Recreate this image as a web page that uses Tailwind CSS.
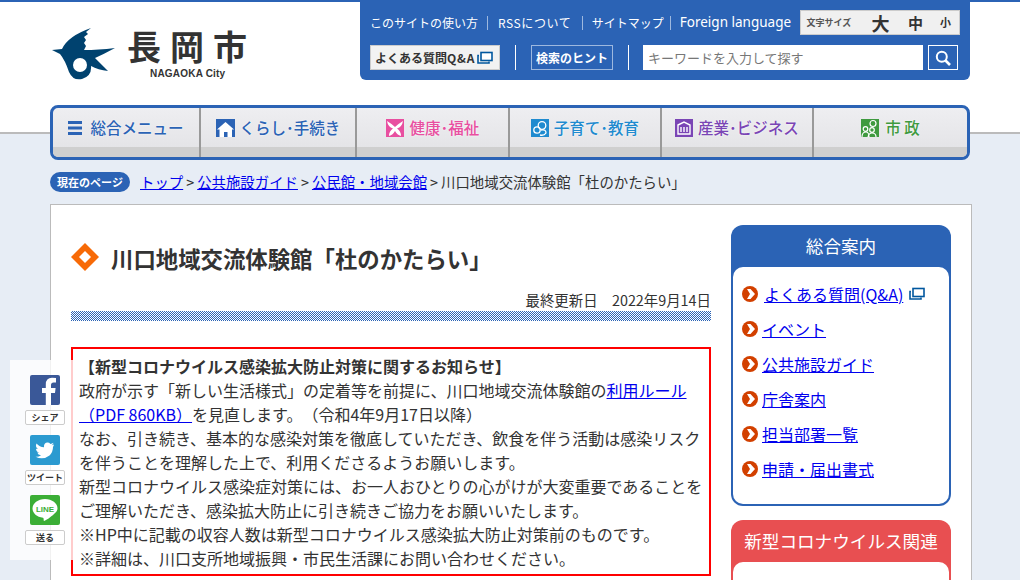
<!DOCTYPE html>
<html lang="ja">

<head>
    <meta charset="UTF-8">
    <script src="https://cdn.jsdelivr.net/npm/@tailwindcss/browser@4"></script>
    <title>川口地域交流体験館「杜のかたらい」</title>
</head>

<body class="font-['Noto_Sans_CJK_JP','Noto_Sans',sans-serif] [text-spacing-trim:space-all]">
    <div class="relative h-[580px] w-[1020px] overflow-hidden bg-[#e7edf5] text-[#333]">

        <!-- header -->
        <header class="h-[134px] border-t-2 border-b-2 border-t-[#2b63b5] border-b-[#bbb] bg-white">
            <div class="flex justify-between pr-[50px] pl-[51px]">
                <div class="flex pt-[26px]">
                    <svg class="h-[52px] w-[65px]" viewBox="51 28 65 52">
                        <path fill="#00426f" d="M91 28 L86 32 L88 34 L84 37 L86 40 L84 43 L86 46 L84 50 Q98 50 115 48 Q104 54 95 58 L108 71 Q98 70 91 66 Q92 76 82 79 Q73 81 69 72 Q65 60 60 54 L52 50 L62 49 Q68 36 91 28 Z" />
                        <circle cx="80" cy="65" r="7" fill="#fff" />
                    </svg>
                    <div class="ml-[11px] flex flex-col">
                        <div class="h-[36px] text-[34px] leading-[36px] font-bold tracking-[9px] text-[#333]">長岡市</div>
                        <div class="mt-[4px] ml-[23px] font-['Liberation_Sans'] text-[10px] leading-[12px] font-bold tracking-[0.2px]">NAGAOKA City</div>
                    </div>
                </div>

                <div class="flex h-[78px] w-[610px] flex-col rounded-b-[6px] bg-[#2b63b5] px-[10px] pt-[8px]">
                    <div class="flex h-[25px] items-center text-white">
                        <a class="w-[107px] text-[12px] whitespace-nowrap">このサイトの使い方</a>
                        <span class="mx-[10px] h-[14px] w-px bg-[#9db8df]"></span>
                        <a class="w-[75px] text-[12px] tracking-[0.6px] whitespace-nowrap">RSSについて</a>
                        <span class="mx-[9px] h-[14px] w-px bg-[#9db8df]"></span>
                        <a class="w-[69px] text-[12px] whitespace-nowrap">サイトマップ</a>
                        <span class="mx-[9px] h-[14px] w-px bg-[#9db8df]"></span>
                        <a class="w-[112px] font-['Noto_Sans'] text-[13.5px] whitespace-nowrap">Foreign language</a>
                        <div class="ml-[9px] flex h-[25px] w-[160px] items-center border border-[#ccc] bg-[#f0f0f0] pl-[5px] font-bold text-[#333]">
                            <span class="w-[54px] text-[9px] text-[#555]">文字サイズ</span>
                            <span class="ml-[7px] w-[26px] text-center text-[18px] leading-none">大</span>
                            <span class="ml-[11px] w-[22px] text-center text-[15px] leading-none">中</span>
                            <span class="ml-[8px] w-[22px] text-center text-[11px] leading-none">小</span>
                        </div>
                    </div>
                    <div class="mt-[10px] flex h-[25px] items-center">
                        <a class="flex h-[25px] w-[130px] items-center border border-[#ccc] bg-[#f2f2f2] pl-[4px] text-[12px] font-bold whitespace-nowrap text-[#333]">
                            よくある質問<span class="tracking-[0.8px]">Q&amp;A</span>
                            <svg class="ml-[2px] h-[14px] w-[16px]" viewBox="0 0 16 14" fill="none" stroke="#00579f" stroke-width="1.6">
                                <rect x="4" y="1.5" width="11" height="8" fill="#fff" />
                                <path d="M2 4.5H1V12H12V10.5" />
                            </svg>
                        </a>
                        <span class="mx-[15px] h-[25px] w-px bg-white"></span>
                        <a class="flex h-[25px] w-[82px] items-center justify-center border border-[#9db8df] text-[12px] font-bold text-white">検索のヒント</a>
                        <span class="mr-[14px] ml-[15px] h-[25px] w-px bg-white"></span>
                        <div class="flex h-[25px] w-[280px] items-center bg-white pl-[5px] text-[13px] text-[#777]">キーワードを入力して探す</div>
                        <div class="ml-[5px] flex h-[25px] w-[30px] items-center justify-center border border-white">
                            <svg class="h-[16px] w-[16px]" viewBox="0 0 16 16" fill="none" stroke="#fff" stroke-width="2">
                                <circle cx="6.8" cy="6.8" r="5" />
                                <path d="M10.5 10.5L15 15" stroke-width="2.6" />
                            </svg>
                        </div>
                    </div>
                </div>
            </div>
        </header>

        <!-- global nav -->
        <nav class="mx-[50px] mt-[-29px] flex h-[55px] w-[920px] overflow-hidden rounded-[8px] border-[3px] border-[#2b63b5] bg-[linear-gradient(#eeeef1,#e2e2e5)] text-[15.5px] font-medium [text-shadow:0_0_2px_#fff]">
            <a class="flex w-[148px] flex-col border-r-2 border-[#999]">
                <div class="flex h-[39px] items-center justify-center text-[#2b63b5]">
                    <svg class="mr-[8px] h-[14px] w-[14px]" viewBox="0 0 14 14" fill="#2b63b5"><rect y="0" width="14" height="3" /><rect y="5.5" width="14" height="3" /><rect y="11" width="14" height="3" /></svg>
                    総合メニュー
                </div>
                <div class="h-[10px] bg-[#cfcfcf]"></div>
            </a>
            <a class="flex w-[156px] flex-col border-r-2 border-[#999]">
                <div class="flex h-[39px] items-center justify-center text-[#2b63b5]">
                    <svg class="mr-[5px] h-[18px] w-[19px]" viewBox="0 0 19 18"><rect width="19" height="18" fill="#2b63b5" /><path fill="#fff" d="M9.5 3L18 10.5H16V18H11.500V13H8V18H3.500V10.500H1Z" /></svg>
                    くらし･手続き
                </div>
                <div class="h-[10px] bg-[#cfcfcf]"></div>
            </a>
            <a class="flex w-[153px] flex-col border-r-2 border-[#999]">
                <div class="flex h-[39px] items-center justify-center text-[#e84fa0]">
                    <svg class="mr-[6px] h-[18px] w-[18px]" viewBox="0 0 18 18"><rect width="18" height="18" fill="#e84fa0" /><path fill="#fff" d="M1 2Q6 5 9 8Q12 5 17 2Q16 8 11 9.500Q15 12 15 17Q11 16 9 12Q7 16 3 17Q3 12 7 9.500Q2 8 1 2Z" /></svg>
                    健康･福祉
                </div>
                <div class="h-[10px] bg-[#cfcfcf]"></div>
            </a>
            <a class="flex w-[152px] flex-col border-r-2 border-[#999]">
                <div class="flex h-[39px] items-center justify-center text-[#1f8bcf]">
                    <svg class="mr-[5px] h-[18px] w-[18px]" viewBox="0 0 18 18" fill="none" stroke="#fff" stroke-width="1.3"><rect width="18" height="18" fill="#1f8bcf" stroke="none" /><circle cx="11" cy="6.500" r="3.800" /><circle cx="6" cy="11" r="3.200" /><path d="M10 11Q15 10 15 14Q13 17 9 16" /></svg>
                    子育て･教育
                </div>
                <div class="h-[10px] bg-[#cfcfcf]"></div>
            </a>
            <a class="flex w-[152px] flex-col border-r-2 border-[#999]">
                <div class="flex h-[39px] items-center justify-center text-[#7a45b5]">
                    <svg class="mr-[5px] h-[18px] w-[18px]" viewBox="0 0 18 18" fill="none" stroke="#fff" stroke-width="1.4"><rect width="18" height="18" fill="#7a45b5" stroke="none" /><path d="M3 6L9 3L15 6V15H3Z" /><path d="M6 8V13M9 8V13M12 8V13" /></svg>
                    産業･ビジネス
                </div>
                <div class="h-[10px] bg-[#cfcfcf]"></div>
            </a>
            <a class="flex flex-1 flex-col">
                <div class="flex h-[39px] items-center justify-center text-[#3f9a3f]">
                    <svg class="mr-[6px] h-[18px] w-[18px]" viewBox="0 0 18 18" fill="none" stroke="#fff" stroke-width="1.2"><rect width="18" height="18" fill="#3f9a3f" stroke="none" /><circle cx="12" cy="4.500" r="3" /><circle cx="4.500" cy="10" r="2.300" /><circle cx="11" cy="11" r="2.300" /><path d="M1 18Q1 13 5 13Q8 13 8 18M7 18Q8 14 11 14Q15 14 15 18" /></svg>
                    市&nbsp;政
                </div>
                <div class="h-[10px] bg-[#cfcfcf]"></div>
            </a>
        </nav>

        <!-- breadcrumb -->
        <div class="mx-[50px] mt-[12px] flex h-[20px] items-center text-[14.4px] text-[#333]">
            <span class="flex h-[20px] w-[80px] items-center justify-center rounded-full bg-[#2b63b5] text-[11px] font-bold text-white">現在のページ</span>
            <a href="#" class="ml-[10px] text-[#0000ee] underline">トップ</a>
            <span class="mx-[3px]">&gt;</span>
            <a href="#" class="text-[#0000ee] underline">公共施設ガイド</a>
            <span class="mx-[3px]">&gt;</span>
            <a href="#" class="text-[#0000ee] underline">公民館・地域会館</a>
            <span class="mx-[3px]">&gt;</span>
            <span>川口地域交流体験館「杜のかたらい」</span>
        </div>

        <!-- main -->
        <main class="mx-[50px] mt-[12px] flex h-[500px] w-[922px] border border-[#bbb] bg-white">
            <div class="ml-[20px] w-[640px]">
                <div class="mt-[37px] flex h-[30px] items-center">
                    <svg class="h-[28px] w-[28px]" viewBox="0 0 28 28"><path fill="#f76a07" d="M14 0L28 14L14 28L0 14Z" /><path fill="#fff" d="M14 8L20 14L14 20L8 14Z" /></svg>
                    <h1 class="ml-[12px] pt-[3px] text-[22.4px] font-bold whitespace-nowrap">川口地域交流体験館「杜のかたらい」</h1>
                </div>
                <p class="mt-[16px] h-[24px] text-right text-[14.4px] leading-[24px]">最終更新日　2022年9月14日</p>
                <div class="mt-[-1px] h-[10px] bg-[repeating-conic-gradient(#2b63b5_0_25%,#fff_0_50%)] bg-[length:2px_2px]"></div>
                <div class="mt-[26px] h-[229px] border-2 border-[#ff0000] pt-[5px] pl-[6px] text-[16px] leading-[24px] whitespace-nowrap">
                    <strong class="font-bold">【新型コロナウイルス感染拡大防止対策に関するお知らせ】</strong><br>
                    政府が示す「新しい生活様式」の定着等を前提に、川口地域交流体験館の<a href="#" class="text-[#0000ee] underline">利用ルール</a><br>
                    <a href="#" class="text-[#0000ee] underline">（PDF 860KB）</a>を見直します。（令和4年9月17日以降）<br>
                    なお、引き続き、基本的な感染対策を徹底していただき、飲食を伴う活動は感染リスク<br>
                    を伴うことを理解した上で、利用くださるようお願いします。<br>
                    新型コロナウイルス感染症対策には、お一人おひとりの心がけが大変重要であることを<br>
                    ご理解いただき、感染拡大防止に引き続きご協力をお願いいたします。<br>
                    ※HP中に記載の収容人数は新型コロナウイルス感染拡大防止対策前のものです。<br>
                    ※詳細は、川口支所地域振興・市民生活課にお問い合わせください。
                </div>
            </div>

            <aside class="mt-[20px] ml-[20px] w-[220px]">
                <section class="h-[281px] rounded-[12px] bg-[#2b63b5] px-[2px] pb-[2px]">
                    <h2 class="h-[42px] text-center text-[17.6px] leading-[42px] text-white">総合案内</h2>
                    <ul class="h-[237px] rounded-[10px] bg-white pt-[9px] pl-[9px] text-[16px]">
                        <li class="flex h-[35px] items-center">
                            <span class="flex h-[16px] w-[16px] items-center justify-center rounded-full bg-[#d24000]"><svg class="h-[10px] w-[10px]" viewBox="0 0 10 10"><path fill="#fff" d="M2 0H5.500L10 5L5.500 10H2L5 5Z" /></svg></span>
                            <a href="#" class="ml-[6px] text-[#0000ee] underline">よくある質問(Q&amp;A)</a>
                            <svg class="ml-[6px] h-[14px] w-[16px]" viewBox="0 0 16 14" fill="none" stroke="#00579f" stroke-width="1.6"><rect x="4" y="1.5" width="11" height="8" fill="#fff" /><path d="M2 4.500H1V12H12V10.500" /></svg>
                        </li>
                        <li class="flex h-[35px] items-center">
                            <span class="flex h-[16px] w-[16px] items-center justify-center rounded-full bg-[#d24000]"><svg class="h-[10px] w-[10px]" viewBox="0 0 10 10"><path fill="#fff" d="M2 0H5.500L10 5L5.500 10H2L5 5Z" /></svg></span>
                            <a href="#" class="ml-[4px] text-[#0000ee] underline">イベント</a>
                        </li>
                        <li class="flex h-[35px] items-center">
                            <span class="flex h-[16px] w-[16px] items-center justify-center rounded-full bg-[#d24000]"><svg class="h-[10px] w-[10px]" viewBox="0 0 10 10"><path fill="#fff" d="M2 0H5.500L10 5L5.500 10H2L5 5Z" /></svg></span>
                            <a href="#" class="ml-[4px] text-[#0000ee] underline">公共施設ガイド</a>
                        </li>
                        <li class="flex h-[35px] items-center">
                            <span class="flex h-[16px] w-[16px] items-center justify-center rounded-full bg-[#d24000]"><svg class="h-[10px] w-[10px]" viewBox="0 0 10 10"><path fill="#fff" d="M2 0H5.500L10 5L5.500 10H2L5 5Z" /></svg></span>
                            <a href="#" class="ml-[4px] text-[#0000ee] underline">庁舎案内</a>
                        </li>
                        <li class="flex h-[35px] items-center">
                            <span class="flex h-[16px] w-[16px] items-center justify-center rounded-full bg-[#d24000]"><svg class="h-[10px] w-[10px]" viewBox="0 0 10 10"><path fill="#fff" d="M2 0H5.500L10 5L5.500 10H2L5 5Z" /></svg></span>
                            <a href="#" class="ml-[4px] text-[#0000ee] underline">担当部署一覧</a>
                        </li>
                        <li class="flex h-[35px] items-center">
                            <span class="flex h-[16px] w-[16px] items-center justify-center rounded-full bg-[#d24000]"><svg class="h-[10px] w-[10px]" viewBox="0 0 10 10"><path fill="#fff" d="M2 0H5.500L10 5L5.500 10H2L5 5Z" /></svg></span>
                            <a href="#" class="ml-[4px] text-[#0000ee] underline">申請・届出書式</a>
                        </li>
                    </ul>
                </section>
                <section class="mt-[14px] h-[120px] rounded-[12px] bg-[#e84f51] px-[2px]">
                    <h2 class="h-[42px] text-center text-[17.6px] leading-[42px] text-white">新型コロナウイルス関連</h2>
                    <div class="h-[78px] rounded-[10px] bg-white"></div>
                </section>
            </aside>
        </main>

        <!-- share buttons -->
        <div class="absolute top-[360px] left-[10px] flex h-[200px] w-[65px] flex-col bg-white/80 pt-[15px] pl-[15px] text-center text-[9px] leading-[14px] font-bold text-[#333]">
            <svg class="ml-[5px] h-[30px] w-[30px]" viewBox="0 0 30 30"><rect width="30" height="30" rx="2" fill="#3a5898" /><path fill="#fff" d="M21 30V18H25L25.600 13H21V10Q21 7.500 23.500 7.500H26V3Q24 2.700 22 2.700Q15.800 2.700 15.800 9.500V13H12V18H15.800V30Z" /></svg>
            <span class="mt-[5px] h-[15px] w-[40px] rounded-[2px] border border-[#ccc] bg-white">シェア</span>
            <svg class="mt-[10px] ml-[5px] h-[30px] w-[30px]" viewBox="0 0 30 30"><rect width="30" height="30" rx="2" fill="#2b9ad0" /><path fill="#fff" d="M24 9.500Q22.500 10.200 21.500 10.300Q23 9.400 23.500 7.800Q22 8.700 20.500 9Q19 7.400 17 7.600Q13.700 8 14 12.300Q9.500 12 6.500 8.400Q5 11.500 7.800 14Q6.800 14 6 13.500Q6 16.500 9 17.600Q8 17.800 7.200 17.600Q8 20 11 20.300Q8.500 22.200 5.500 21.800Q13 25.500 19.500 20.500Q23 17 23 12Q23.500 11 24 9.500Z" /></svg>
            <span class="mt-[5px] h-[15px] w-[40px] rounded-[2px] border border-[#ccc] bg-white">ツイート</span>
            <svg class="mt-[10px] ml-[5px] h-[30px] w-[30px]" viewBox="0 0 30 30"><rect width="30" height="30" rx="2" fill="#3bae36" /><path fill="#fff" d="M15 4C8 4 2.500 8.300 2.500 13.500C2.500 18.300 7 22 13 22.800C14 23 13.500 26 14 26C15 26 21 22 24 19C26.500 17 27.500 15.300 27.500 13.500C27.500 8.300 22 4 15 4Z" /><text x="15" y="16.500" text-anchor="middle" font-size="8" font-weight="700" font-family="Liberation Sans" fill="#3bae36">LINE</text></svg>
            <span class="mt-[5px] h-[15px] w-[40px] rounded-[2px] border border-[#ccc] bg-white">送る</span>
        </div>
    </div>
</body>

</html>
